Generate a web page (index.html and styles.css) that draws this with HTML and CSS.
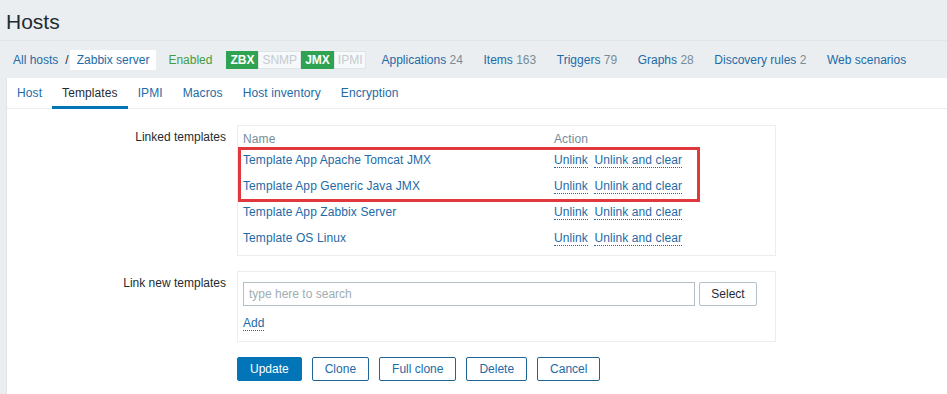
FILE: index.html
```html
<!DOCTYPE html>
<html lang="en">
<head>
    <meta charset="UTF-8">
    <title>Hosts</title>
    <link rel="stylesheet" href="styles.css">
</head>
<body>

    <!-- Page title -->
    <header class="page-header">
        <h1>Hosts</h1>
    </header>

    <!-- Host navigation -->
    <div class="host-nav">
        <a href="#">All hosts</a>
        <span class="sep">/</span>
        <span class="current">Zabbix server</span>
        <span class="enabled">Enabled</span>
        <div class="status-box">
            <span class="st st-green">ZBX</span>
            <span class="st st-grey">SNMP</span>
            <span class="st st-green">JMX</span>
            <span class="st st-grey">IPMI</span>
        </div>
        <ul class="objects">
            <li><a href="#">Applications</a> <span class="count">24</span></li>
            <li><a href="#">Items</a> <span class="count">163</span></li>
            <li><a href="#">Triggers</a> <span class="count">79</span></li>
            <li><a href="#">Graphs</a> <span class="count">28</span></li>
            <li><a href="#">Discovery rules</a> <span class="count">2</span></li>
            <li><a href="#">Web scenarios</a></li>
        </ul>
    </div>

    <main class="content">
        <ul class="tabs">
            <li><a href="#">Host</a></li>
            <li class="active"><a href="#">Templates</a></li>
            <li><a href="#">IPMI</a></li>
            <li><a href="#">Macros</a></li>
            <li><a href="#">Host inventory</a></li>
            <li><a href="#">Encryption</a></li>
        </ul>

        <form class="host-form">
            <label class="form-label">Linked templates</label>
            <div class="field-box linked">
                <table class="linked-table">
                    <thead>
                        <tr><th class="col-name">Name</th><th>Action</th></tr>
                    </thead>
                    <tbody>
                        <tr>
                            <td><a href="#">Template App Apache Tomcat JMX</a></td>
                            <td><a href="#" class="action">Unlink</a> <a href="#" class="action">Unlink and clear</a></td>
                        </tr>
                        <tr>
                            <td><a href="#">Template App Generic Java JMX</a></td>
                            <td><a href="#" class="action">Unlink</a> <a href="#" class="action">Unlink and clear</a></td>
                        </tr>
                        <tr>
                            <td><a href="#">Template App Zabbix Server</a></td>
                            <td><a href="#" class="action">Unlink</a> <a href="#" class="action">Unlink and clear</a></td>
                        </tr>
                        <tr>
                            <td><a href="#">Template OS Linux</a></td>
                            <td><a href="#" class="action">Unlink</a> <a href="#" class="action">Unlink and clear</a></td>
                        </tr>
                    </tbody>
                </table>
                <!-- highlight around the two JMX templates -->
                <div class="mark"></div>
            </div>

            <label class="form-label">Link new templates</label>
            <div class="field-box new">
                <div class="search-row">
                    <input type="text" placeholder="type here to search">
                    <button type="button" class="btn-grey">Select</button>
                </div>
                <div class="add-row"><a href="#" class="action">Add</a></div>
            </div>

            <div class="buttons">
                <button type="button" class="btn-main">Update</button>
                <button type="button" class="btn-alt">Clone</button>
                <button type="button" class="btn-alt">Full clone</button>
                <button type="button" class="btn-alt">Delete</button>
                <button type="button" class="btn-alt">Cancel</button>
            </div>
        </form>
    </main>

</body>
</html>
```

FILE: styles.css
```css
* {
    margin: 0;
    padding: 0;
    box-sizing: border-box;
}

body {
    background-color: #ebeef0;
    color: #1f2c33;
    font: 12px/14px "Liberation Sans", Arial, sans-serif;
    overflow: hidden;
    height: 394px;
    display: flex;
    flex-direction: column;
}

a {
    color: #1e6aa6;
    text-decoration: none;
}

/* Title */
.page-header {
    height: 41px;
    padding: 10px 0 0 6px;
    border-bottom: 1px solid #e2e6e9;
}

.page-header h1 {
    font-size: 21px;
    font-weight: normal;
    line-height: 24px;
}

/* Host navigation */
.host-nav {
    height: 37px;
    display: flex;
    align-items: center;
    padding-left: 13px;
}

.host-nav .sep {
    margin: 0 1px 0 7px;
    color: #1f2c33;
}

.host-nav .current {
    background-color: #fff;
    padding: 0 7px;
    line-height: 20px;
    color: #1e6aa6;
}

.enabled {
    margin-left: 12px;
    color: #429b47;
}

.status-box {
    display: flex;
    margin-left: 14px;
}

.st {
    padding: 0 3px;
    line-height: 16px;
    border: 1px solid;
}

.st-green {
    background-color: #2fa352;
    border-color: #2fa352;
    color: #fff;
    font-weight: bold;
}

.st-grey {
    background-color: #f7f8f9;
    border-color: #dfe4e7;
    color: #c3ccd1;
}

.objects {
    display: flex;
    list-style: none;
    margin-left: 15px;
    gap: 20.6px;
}

.objects .count {
    color: #768d99;
}

/* Content */
.content {
    flex: 1;
    margin-left: 6px;
    background-color: #fff;
    border-left: 1px solid #dfe4e7;
}

.tabs {
    display: flex;
    list-style: none;
    border-bottom: 1px solid #ebeef0;
    letter-spacing: 0.1px;
}

.tabs li a {
    display: block;
    padding: 0 10px;
    line-height: 31px;
    height: 31px;
    margin-bottom: -1px;
}

.tabs li.active a {
    color: #1f2c33;
    box-shadow: inset 0 -3px 0 0 #0275b8;
}

/* Form */
.host-form {
    display: grid;
    grid-template-columns: 219px 539px;
    column-gap: 11px;
    row-gap: 15px;
    padding-top: 16px;
}

.form-label {
    text-align: right;
    padding-top: 5px;
}

.field-box {
    border: 1px solid #ebeef0;
    position: relative;
}

.linked {
    padding: 5px 5px 4px;
    letter-spacing: 0.1px;
}

.linked-table {
    border-collapse: collapse;
}

.linked-table th {
    text-align: left;
    font-weight: normal;
    color: #768d99;
    line-height: 16px;
}

.linked-table .col-name {
    width: 311px;
}

.linked-table td {
    height: 26px;
    vertical-align: middle;
}

.action {
    border-bottom: 1px dotted #1e6aa6;
}

.action + .action {
    margin-left: 3px;
}

.mark {
    position: absolute;
    left: 0;
    top: 21px;
    width: 462px;
    height: 55px;
    border: 3px solid #e1383e;
}

.new {
    padding: 10px 5px 9px;
}

.search-row {
    display: flex;
    gap: 4px;
}

.search-row input {
    width: 452px;
    height: 24px;
    border: 1px solid #b3c0c6;
    padding: 0 5px;
    font: 12px "Liberation Sans", Arial, sans-serif;
    color: #1f2c33;
}

.search-row input::placeholder {
    color: #a0adb3;
}

.btn-grey {
    width: 58px;
    height: 24px;
    background-color: #fff;
    border: 1px solid #b3c0c6;
    border-radius: 2px;
    color: #1f2c33;
    font: 12px "Liberation Sans", Arial, sans-serif;
}

.add-row {
    margin-top: 8px;
    line-height: 18px;
}

.buttons {
    grid-column: 2;
    display: flex;
    gap: 10px;
}

.buttons button {
    height: 24px;
    padding: 0 12px;
    border-radius: 2px;
    font: 12px "Liberation Sans", Arial, sans-serif;
}

.btn-main {
    background-color: #0275b8;
    border: 1px solid #0275b8;
    color: #fff;
}

.btn-alt {
    background-color: #fff;
    border: 1px solid #1f6496;
    color: #1e6aa6;
}
```
